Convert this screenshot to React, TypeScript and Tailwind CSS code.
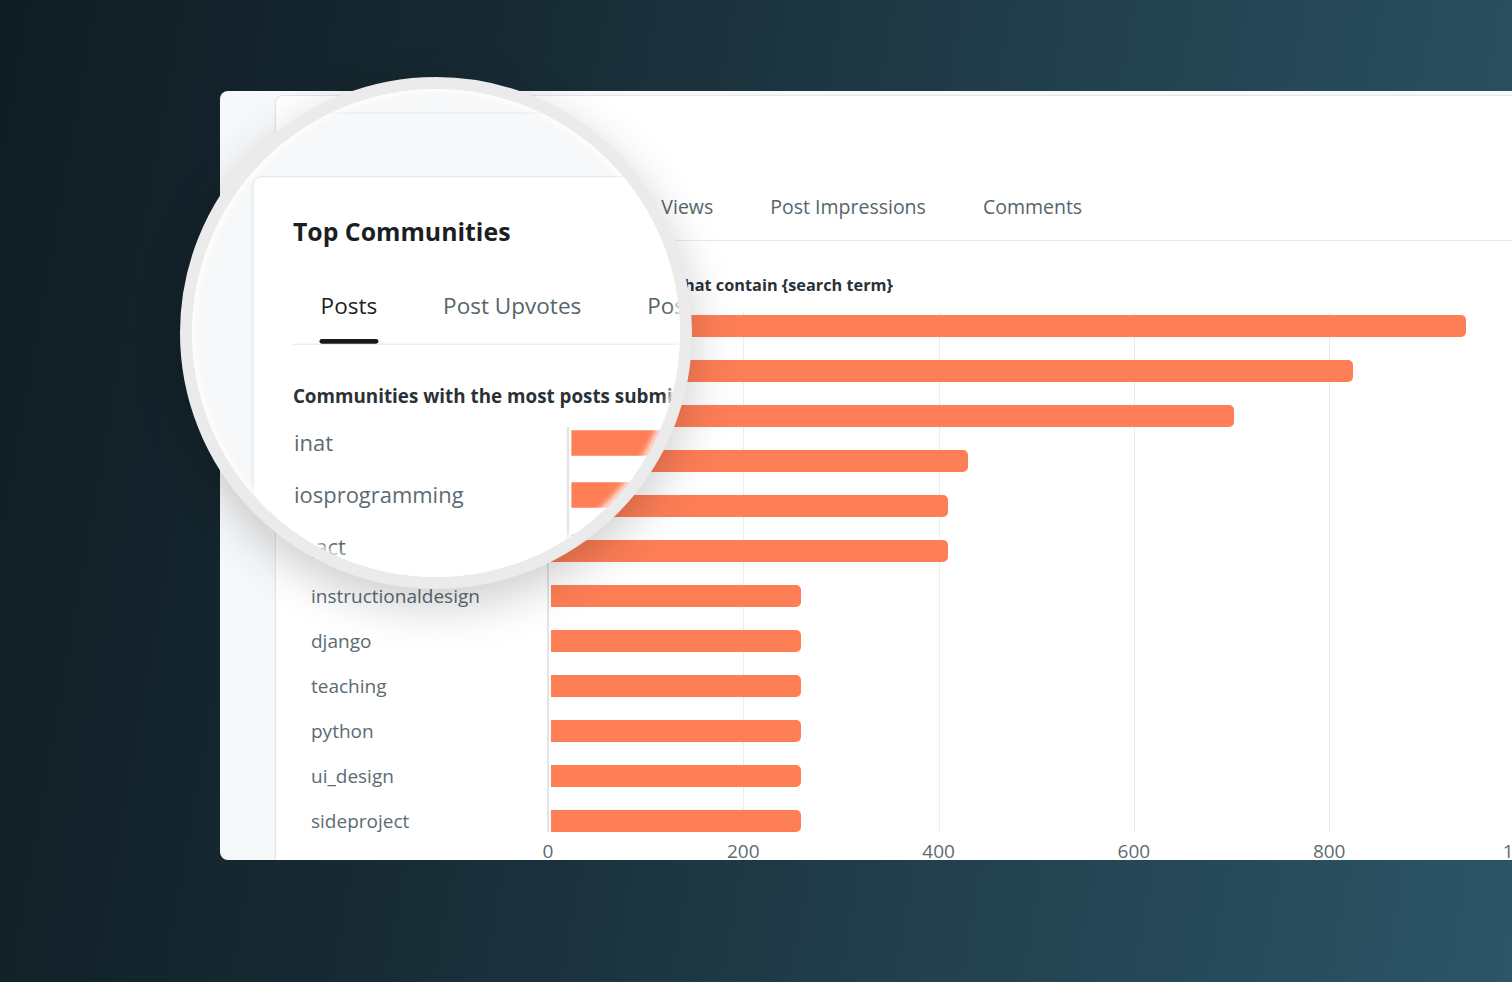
const ROWS = [
  { name: 'inat', value: 940 },
  { name: 'iosprogramming', value: 824 },
  { name: 'react', value: 703 },
  { name: 'webdev', value: 430 },
  { name: 'javascript', value: 410 },
  { name: 'Frontend', value: 410 },
  { name: 'instructionaldesign', value: 259 },
  { name: 'django', value: 259 },
  { name: 'teaching', value: 259 },
  { name: 'python', value: 259 },
  { name: 'ui_design', value: 259 },
  { name: 'sideproject', value: 259 },
];

const TABS = ['Posts', 'Post Upvotes', 'Post Views', 'Post Impressions', 'Comments'];
const TICKS = [0, 200, 400, 600, 800, 1000];

// 200 units on the axis take 195.3px
const PX = 195.3 / 200;

function Chart() {
  return (
    <div className="mt-[7px]">
      <div className="relative">
        {/* grid lines, one column per 200 */}
        <div className="pointer-events-none absolute top-[9px] bottom-[11px] left-[237px] flex border-l-2 border-[#e2e4e6]">
          {TICKS.slice(1).map((t) => (
            <div key={t} className="w-[195.3px] shrink-0 border-r border-[#ececec]" />
          ))}
        </div>

        {ROWS.map((r) => (
          <div key={r.name} className="relative flex h-[45px] items-center">
            <div className="w-[238px] shrink-0 pl-px text-[19px] leading-[26px] text-[#5c6b73]">{r.name}</div>
            <div
              className="ml-[3px] h-[22px] rounded-r-[5px] bg-[#fe7e56]"
              style={{ width: r.value * PX - 3 }}
            />
          </div>
        ))}
      </div>

      {/* axis labels, centred under each grid line */}
      <div className="-mt-[5px] ml-[140.35px] flex h-[26px]">
        {TICKS.map((t) => (
          <span key={t} className="w-[195.3px] shrink-0 text-center text-[19px] leading-[26px] text-[#5c6b73]">
            {t}
          </span>
        ))}
      </div>
    </div>
  );
}

function Window() {
  return (
    <div className="flex h-[769px] w-[1340px] overflow-hidden rounded-l-[8px] bg-[#f7f8f9] pl-[55px] pt-[4px]">
      <div className="flex-1 rounded-tl-[8px] border-l border-t border-[#e3e7ea] bg-white pl-[34px] shadow-[0_1px_3px_rgba(15,23,42,0.05)]">
        <h2 className="pt-[32px] text-[21.5px] font-bold leading-[30px] text-[#1b1f23]">Top Communities</h2>

        <div className="mt-[36px] flex gap-[9px] border-b border-[#e6e9ec]">
          {TABS.map((t, i) => (
            <div key={t} className="px-6">
              <div className={`whitespace-nowrap text-[19.5px] leading-[26px] ${i === 0 ? 'text-[#1b1f23]' : 'text-[#55656d]'}`}>
                {t}
              </div>
              <div className={`mt-[16px] -mx-[1px] h-[4px] rounded-full ${i === 0 ? 'bg-[#161a1d]' : 'bg-transparent'}`} />
            </div>
          ))}
        </div>

        <p className="mt-[33px] whitespace-nowrap text-[16.3px] font-bold leading-[22px] text-[#2a3237]">
          Communities with the most posts submitted that contain {'{search term}'}
        </p>

        <Chart />
      </div>
    </div>
  );
}

export default function App() {
  return (
    <div
      className="relative h-[982px] w-[1512px] overflow-hidden bg-[linear-gradient(100deg,#101c23_0%,#172a33_30%,#22404d_65%,#2c5567_100%)]"
      style={{ fontFamily: '"Open Sans", "Noto Sans", sans-serif' }}
    >
      <div className="pl-[220px] pt-[91px]">
        <Window />
      </div>

      {/* magnifier lens: the same window, scaled up */}
      <div className="absolute left-[180px] top-[77px] h-[512px] w-[512px] overflow-hidden rounded-full border-[12px] border-[#ebebeb] bg-[#f7f8f9] shadow-[0_16px_48px_rgba(0,0,0,0.2)]">
        <div className="absolute left-[-192px] top-[-89px] h-[982px] w-[1512px] origin-[420px_-426px] scale-[1.1556]">
          <div className="absolute left-[275px] right-0 top-[40px] h-px bg-[#e3e7ea]" />
          <div className="pl-[220px] pt-[91px]">
            <Window />
          </div>
        </div>
        <div className="pointer-events-none absolute inset-0 rounded-full shadow-[inset_0_0_6px_3px_rgba(255,255,255,0.9)]" />
      </div>
    </div>
  );
}
